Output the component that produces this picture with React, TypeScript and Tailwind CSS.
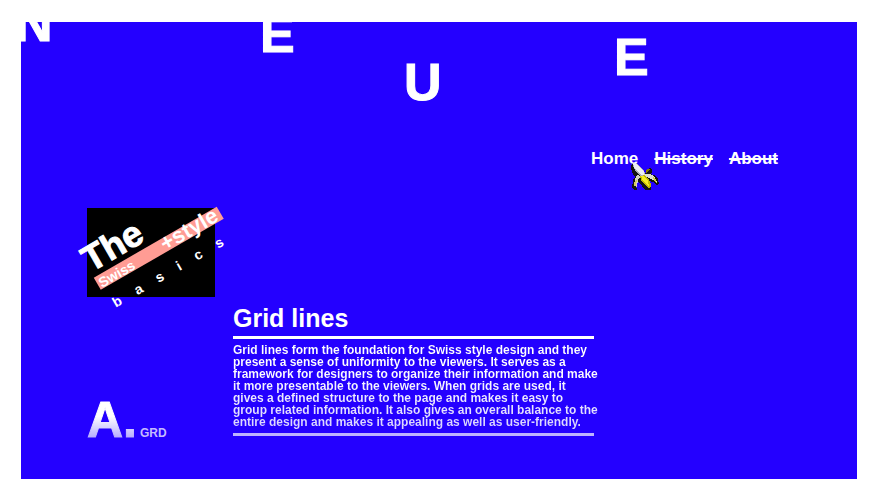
const letters = [
  { char: "N", place: "-left-1.5 -top-[25px]" },
  { char: "E", place: "left-[239px] -top-3.5" },
  { char: "U", place: "left-[383px] top-[34px]" },
  { char: "E", place: "left-[593px] top-[9px]" },
];

const links = [
  { label: "Home", visited: true },
  { label: "History", visited: false },
  { label: "About", visited: false },
];

const paragraph = [
  "Grid lines form the foundation for Swiss style design and they",
  "present a sense of uniformity to the viewers. It serves as a",
  "framework for designers to organize their information and make",
  "it more presentable to the viewers. When grids are used, it",
  "gives a defined structure to the page and makes it easy to",
  "group related information. It also gives an overall balance to the",
  "entire design and makes it appealing as well as user-friendly.",
];

function Banana() {
  return (
    <svg
      className="pointer-events-none absolute left-10 top-3 h-7 w-7"
      viewBox="0 0 28 28"
      shapeRendering="crispEdges"
      aria-hidden="true"
    >
      <path d="M1 1h4l7 7 3 4 1-4 3-2 2 2v3l-3 1 5 1 4 4 1 5-2 1-4-3-4-1 2 4v4l-2 2-4-1-5-7-2-1-2 4 1 3-2 2-3-3 1-8 2-3-3-5-1-4z" fill="#141414" />
      <path d="M1 1h4l8 8 2 4-5 2-4-4-3-5z" fill="#aeaeb8" />
      <path d="M2 1h2l8 7 2 5-3 0-5-4-3-4z" fill="#eeeef4" />
      <path d="M6 13l4 1-3 4-1 7-3-1 1-7z" fill="#d2d2c0" />
      <path d="M3 20l3-2-1 5-1 2-1-1z" fill="#d6ca62" />
      <path d="M13 12l6 0 4 2 3 6-4-2-4-2-4-2z" fill="#dedecf" />
      <path d="M22 15l2 1 2 5-3-2z" fill="#d8cf3a" />
      <path d="M9 14l5-1 4 5 2 4v3l-3 1-3-3-4-5z" fill="#c2bc00" />
      <path d="M10 14h3l4 5 1 5-2-1-4-4z" fill="#f5ec28" />
      <path d="M15 8l2-1 2 0-1 2-3 2z" fill="#857d00" />
    </svg>
  );
}

function Logo() {
  return (
    <div className="relative h-[89px] w-32 bg-black font-bold">
      <div className="absolute -left-0.5 -top-0.5 flex w-[142px] -rotate-30 flex-col">
        <span className="text-[36px] leading-[36px] [-webkit-text-stroke:1px_white]">The</span>
        <div className="flex h-3.5 items-baseline justify-between bg-[#ff9c94] pl-0.5 pr-1 leading-3">
          <span className="text-sm leading-3">Swiss</span>
          <span className="text-[22px] leading-3">+style</span>
        </div>
        <div className="mt-[11px] flex justify-between pl-1 pr-3 text-sm leading-[14px]">
          {"basics".split("").map((char, i) => (
            <span key={i}>{char}</span>
          ))}
        </div>
      </div>
    </div>
  );
}

export default function App() {
  return (
    <div className="flex min-h-screen bg-white pb-[21px] pl-[21px] pr-[22px] pt-[22px] font-['Liberation_Sans',Arial,sans-serif] text-white">
      <div className="relative flex-1 overflow-hidden bg-[#2400ff]">
        <h1
          aria-label="NEUE"
          className="text-[52px] font-bold leading-[52px] [-webkit-text-stroke:1px_white]"
        >
          {letters.map(({ char, place }, i) => (
            <span key={i} className={`absolute ${place}`}>
              {char}
            </span>
          ))}
        </h1>

        <nav className="flex justify-end gap-4 pr-[79px] pt-32 text-[17px] font-bold leading-[18px]">
          {links.map(({ label, visited }) => (
            <div key={label} className="relative">
              <a href="#" className={visited ? "" : "line-through decoration-2"}>
                {label}
              </a>
              {visited && <Banana />}
            </div>
          ))}
        </nav>

        <main className="mt-10 grid grid-cols-[128px_minmax(0,361px)] gap-x-[18px] pl-[66px]">
          <aside className="flex flex-col justify-between">
            <Logo />
            <div className="flex items-baseline gap-[3px] font-bold leading-[38px]">
              <span className="bg-linear-to-b from-white from-40% to-[#b3a6ff] bg-clip-text text-[50px] text-transparent [-webkit-text-stroke:1px_transparent]">
                A.
              </span>
              <span className="text-xs leading-3 text-[#c4baff]">GRD</span>
            </div>
          </aside>

          <article className="pb-[3px] pt-[97px]">
            <h2 className="text-[25px] font-bold leading-[27px]">Grid lines</h2>
            <hr className="mt-1 border-0 border-t-3 border-white" />
            <p className="mt-[5px] w-max bg-linear-to-b from-white from-30% to-[#d6cfff] bg-clip-text pb-[5px] font-['Liberation_Sans',Arial,sans-serif] text-xs font-bold leading-3 text-transparent">
              {paragraph.map((line) => (
                <span key={line} className="block">
                  {line}{" "}
                </span>
              ))}
            </p>
            <hr className="border-0 border-t-3 border-[#bdb2ff]" />
          </article>
        </main>
      </div>
    </div>
  );
}
